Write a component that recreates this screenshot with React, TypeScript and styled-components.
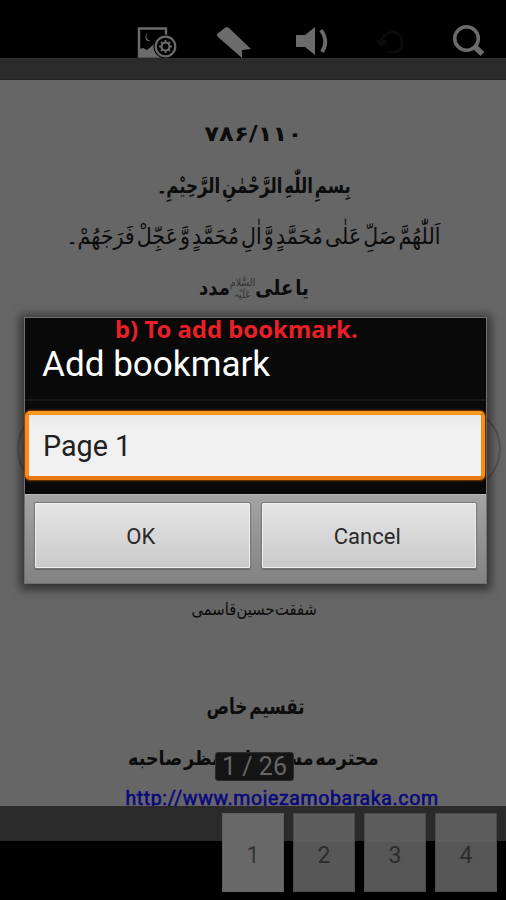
import React from 'react';
import styled, { createGlobalStyle } from 'styled-components';

const GlobalStyle = createGlobalStyle`
  * { box-sizing: border-box; }
  body { margin: 0; background: #000; }
`;

const Screen = styled.div`
  position: relative;
  display: flex;
  flex-direction: column;
  width: 506px;
  height: 900px;
  overflow: hidden;
  background: #000;
  font-family: Roboto, sans-serif;
`;

const Toolbar = styled.header`
  display: flex;
  height: 58px;
  padding: 22px 18px 0 134px;
  justify-content: space-between;
`;

const ToolIcon = styled.svg<{ $color?: string }>`
  width: 40px;
  height: 38px;
  overflow: visible;
  color: ${p => p.$color ?? '#6b6b6b'};
`;

const Strip = styled.div`
  height: 22px;
  flex: none;
  background: #2a2a2a;
  border-bottom: 1px solid #222;
`;

const Document = styled.main`
  height: 726px;
  flex: none;
  background: #666;
  color: #0c0c0c;
  padding-top: 28px;
`;

const Line = styled.div<{ $h: number; $shift?: number }>`
  display: flex;
  height: ${p => p.$h}px;
  align-items: center;
  justify-content: center;
  padding-left: ${p => p.$shift ?? 0}px;
  white-space: nowrap;
`;

const Script = styled.span<{ $size: number; $stretch?: number; $bold?: boolean }>`
  display: inline-flex;
  align-items: center;
  direction: rtl;
  font: ${p => (p.$bold ? 700 : 400)} ${p => p.$size}px/1.2 "DejaVu Sans", sans-serif;
  word-spacing: -5px;
  transform: scaleX(${p => p.$stretch ?? 1});
`;

const Honorific = styled.span`
  display: inline-flex;
  flex-direction: column;
  align-items: center;
  font-size: 11px;
  font-weight: 400;
  line-height: 12px;
  color: #333;
`;

const Gap = styled.div<{ $h: number }>`
  height: ${p => p.$h}px;
`;

const Link = styled.a`
  color: #09097c;
  font: 400 19.5px/22px Roboto, sans-serif;
  -webkit-text-stroke: 0.6px #09097c;
  letter-spacing: 0.62px;
  text-decoration: underline;
  text-decoration-thickness: 1px;
  text-underline-offset: 3px;
`;

const Footer = styled.footer`
  display: flex;
  flex: 1;
  justify-content: flex-end;
  gap: 9px;
  padding: 7px 9px 0 0;
  background: linear-gradient(#2a2a2a 35px, #000 35px);
`;

const Thumb = styled.div<{ $active?: boolean }>`
  display: flex;
  width: 62px;
  height: 79px;
  align-items: center;
  justify-content: center;
  padding: 6px 0 0 0;
  font-size: 23px;
  color: ${p => (p.$active ? '#343434' : '#2c2c2c')};
  border: 1px solid ${p => (p.$active ? '#606060' : '#4b4b4b')};
  background: ${p => (p.$active ? '#686868' : 'linear-gradient(#5d5d5d 28px, #575757 28px)')};
`;

const PageBadge = styled.div`
  position: absolute;
  left: 215px;
  top: 752px;
  width: 79px;
  height: 29px;
  border-radius: 3px;
  border: 1px solid #2b2b2b;
  background: #151515;
  color: #666;
  font-size: 25px;
  line-height: 28px;
  text-align: center;
`;

const PageRing = styled.div`
  position: absolute;
  left: 17px;
  top: 407px;
  width: 484px;
  height: 84px;
  border: 2px solid #525252;
  border-radius: 42px;
`;

const Dialog = styled.section`
  position: absolute;
  left: 24px;
  top: 317px;
  width: 463px;
  height: 267px;
  display: flex;
  flex-direction: column;
  border: 1px solid #707070;
  background: #090909;
  box-shadow: 0 2px 9px 4px rgba(0, 0, 0, 0.5);
`;

const DialogTitle = styled.h1`
  height: 83px;
  margin: 0;
  padding: 25px 0 0 17px;
  border-bottom: 2px solid #181818;
  color: #fff;
  font-size: 35.1px;
  font-weight: 400;
  line-height: 43px;
  white-space: nowrap;
`;

const DialogBody = styled.div`
  flex: 1;
  padding: 10px 1px 0 0;
`;

const Field = styled.div`
  height: 69px;
  padding-left: 14px;
  border: 4px solid;
  border-color: #ff981d #f78c1b #e87914 #f78c1b;
  border-radius: 5px;
  background: linear-gradient(#e9e9e9, #f1f1f1 12px);
  box-shadow: 0 0 2px 1px #7a3c00;
  color: #202020;
  font-size: 28.7px;
  line-height: 62px;
`;

const Actions = styled.div`
  display: flex;
  height: 89px;
  gap: 10px;
  padding: 7px 9px 14px;
  background: linear-gradient(#a4a4a4, #828282);
  border-top: 1px solid #b9b9b9;
`;

const Button = styled.button`
  flex: 1;
  padding: 2px 3px 0 0;
  border: 1px solid #777;
  border-radius: 2px;
  background: linear-gradient(#e5e5e5, #cacaca);
  box-shadow: inset 0 0 0 1px #f0f0f0, 0 1px 1px #666;
  color: #2a2a2a;
  font: 400 22px Roboto, sans-serif;
`;

const Caption = styled.div`
  position: absolute;
  left: 115px;
  top: 314px;
  color: #eb1f28;
  font: 700 24px/30px "Noto Sans", sans-serif;
  white-space: nowrap;
  transform: scaleX(0.994);
  transform-origin: left;
`;

function ImageSettingsIcon() {
  return (
    <ToolIcon viewBox="0 0 40 38">
      <path d="M5 6.5h27v28H5z" fill="none" stroke="currentColor" strokeWidth="2.4" />
      <path d="M5 27l4-1 4 2 6-5 5-7 8 6v13H5z" fill="currentColor" />
      <path d="M14 11c-3 3-2 7 3 8-5 2-8-5-3-8z" fill="currentColor" />
      <circle cx="31.5" cy="24.5" r="12" fill="#000" />
      <circle cx="31.5" cy="24.5" r="9.8" fill="none" stroke="currentColor" strokeWidth="2.2" />
      <circle cx="31.5" cy="24.5" r="4" fill="none" stroke="currentColor" strokeWidth="2.2" />
      <path d="M31.5 18v3m0 7v3m-6.5-6.5h3m7 0h3m-11-4.5 2 2m5 5 2 2m0-9-2 2m-5 5-2 2" stroke="currentColor" strokeWidth="1.8" />
    </ToolIcon>
  );
}

function BookmarkIcon() {
  return (
    <ToolIcon viewBox="0 0 40 38">
      <path d="M4 12l9-7q2 0 3 1l22 21-9 1v8L5 15q-2-2-1-3z" fill="currentColor" />
    </ToolIcon>
  );
}

function SpeakerIcon() {
  return (
    <ToolIcon viewBox="0 0 40 38">
      <path d="M5 13h9l10-8v28l-10-8H5z" fill="currentColor" />
      <path d="M30 8q8 11 1 22" fill="none" stroke="currentColor" strokeWidth="3.8" />
    </ToolIcon>
  );
}

function UndoIcon() {
  return (
    <ToolIcon viewBox="0 0 40 38" $color="#0b0b0b">
      <path d="M11 19C15 8 30 7 32 19c1 8-6 14-14 10" fill="none" stroke="currentColor" strokeWidth="3" />
      <path d="M5 18h13l-6 8z" fill="currentColor" />
    </ToolIcon>
  );
}

function SearchIcon() {
  return (
    <ToolIcon viewBox="0 0 40 38">
      <circle cx="18.5" cy="16.5" r="11.8" fill="none" stroke="currentColor" strokeWidth="3.6" />
      <path d="M27 25l7.5 7" stroke="currentColor" strokeWidth="5.8" />
    </ToolIcon>
  );
}

export default function App() {
  return (
    <Screen>
      <GlobalStyle />
      <Toolbar>
        <ImageSettingsIcon />
        <BookmarkIcon />
        <SpeakerIcon />
        <UndoIcon />
        <SearchIcon />
      </Toolbar>
      <Strip />
      <Document lang="ur">
        <Line $h={54}><Script $size={21} $stretch={1.16} $bold>۷۸۶/۱۱۰</Script></Line>
        <Line $h={50} $shift={1}><Script $size={21} $stretch={0.79} $bold>بِسمِ اللّٰهِ الرَّحْمٰنِ الرَّحِيْمِ۔</Script></Line>
        <Line $h={50} $shift={1}><Script $size={23} $stretch={0.895}>اَللّٰهُمَّ صَلِّ عَلٰى مُحَمَّدٍ وَّ اٰلِ مُحَمَّدٍ وَّ عَجِّلْ فَرَجَهُمْ۔</Script></Line>
        <Line $h={54} $shift={2}>
          <Script $size={21} $stretch={0.86} $bold>
            <span>یا علی</span>
            <Honorific><span>السَّلام</span><span>عَلَیْہ</span></Honorific>
            <span>مدد</span>
          </Script>
        </Line>
        <Gap $h={261} />
        <Line $h={64} $shift={2}><Script $size={17} $stretch={0.87}>شفقت حسین قاسمی</Script></Line>
        <Gap $h={15} />
        <Line $h={102} $shift={5}><Script $size={22} $stretch={0.76} $bold>تقسیم خاص</Script></Line>
        <Line $h={0}><Script $size={20} $stretch={0.88} $bold>محترمه مسز مظفر نظر صاحبه</Script></Line>
        <Line $h={82} $shift={58}><Link>http://www.mojezamobaraka.com</Link></Line>
      </Document>
      <Footer>
        <Thumb $active>1</Thumb>
        <Thumb>2</Thumb>
        <Thumb>3</Thumb>
        <Thumb>4</Thumb>
      </Footer>
      <PageBadge>1 / 26</PageBadge>
      <PageRing />
      <Dialog>
        <DialogTitle>Add bookmark</DialogTitle>
        <DialogBody><Field>Page 1</Field></DialogBody>
        <Actions>
          <Button>OK</Button>
          <Button>Cancel</Button>
        </Actions>
      </Dialog>
      <Caption>b) To add bookmark.</Caption>
    </Screen>
  );
}
